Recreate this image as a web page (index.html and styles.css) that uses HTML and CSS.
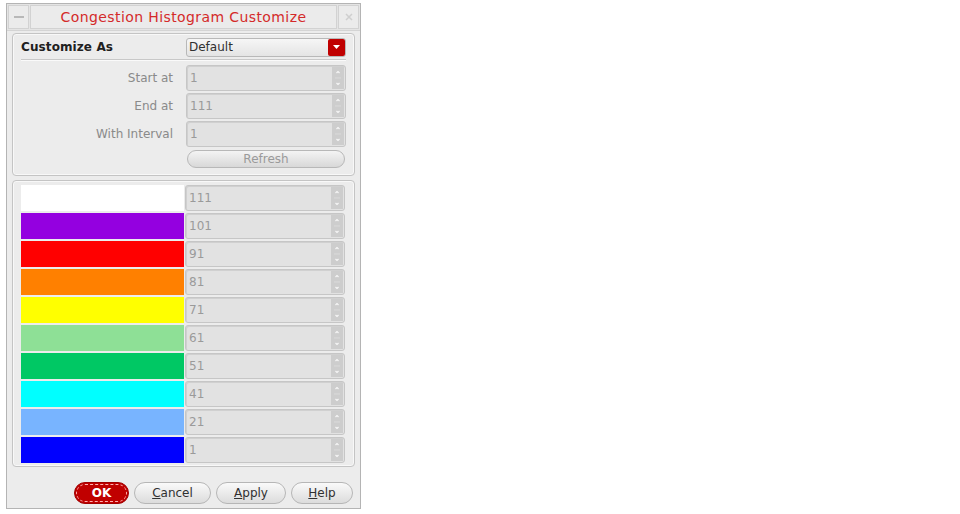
FILE: index.html
```html
<!DOCTYPE html>
<html>
<head>
<meta charset="utf-8">
<link rel="stylesheet" href="styles.css">
</head>
<body>
<div class="dialog">
  <div class="titlebar">
    <div class="tbtn"><span class="minbar"></span></div>
    <div class="title">Congestion Histogram Customize</div>
    <div class="tbtn close">
      <svg width="10" height="10" viewBox="0 0 10 10"><path d="M2 2L8 8M8 2L2 8" stroke="#cfcfcf" stroke-width="1.5"/></svg>
    </div>
  </div>
  <div class="body">
    <div class="group top">
      <div class="row-head">
        <span class="bold">Customize As</span>
        <div class="combo"><span>Default</span><span class="arrow"><svg width="9" height="6" viewBox="0 0 9 6"><path d="M1 1H8L4.5 5Z" fill="#fff"/></svg></span></div>
      </div>
      <div class="sep"></div>
      <div class="frow"><span class="lbl">Start at</span><div class="spin"><span>1</span><i class="sb"></i></div></div>
      <div class="frow"><span class="lbl">End at</span><div class="spin"><span>111</span><i class="sb"></i></div></div>
      <div class="frow"><span class="lbl">With Interval</span><div class="spin"><span>1</span><i class="sb"></i></div></div>
      <div class="refrow"><div class="refresh">Refresh</div></div>
    </div>
    <div class="group colors">
      <div class="crow"><div class="sw" style="background:#ffffff"></div><div class="spin"><span>111</span><i class="sb"></i></div></div>
      <div class="crow"><div class="sw" style="background:#9400e0"></div><div class="spin"><span>101</span><i class="sb"></i></div></div>
      <div class="crow"><div class="sw" style="background:#ff0000"></div><div class="spin"><span>91</span><i class="sb"></i></div></div>
      <div class="crow"><div class="sw" style="background:#ff8000"></div><div class="spin"><span>81</span><i class="sb"></i></div></div>
      <div class="crow"><div class="sw" style="background:#ffff00"></div><div class="spin"><span>71</span><i class="sb"></i></div></div>
      <div class="crow"><div class="sw" style="background:#8ee096"></div><div class="spin"><span>61</span><i class="sb"></i></div></div>
      <div class="crow"><div class="sw" style="background:#00c864"></div><div class="spin"><span>51</span><i class="sb"></i></div></div>
      <div class="crow"><div class="sw" style="background:#00ffff"></div><div class="spin"><span>41</span><i class="sb"></i></div></div>
      <div class="crow"><div class="sw" style="background:#78b4ff"></div><div class="spin"><span>21</span><i class="sb"></i></div></div>
      <div class="crow"><div class="sw" style="background:#0000ff"></div><div class="spin"><span>1</span><i class="sb"></i></div></div>
    </div>
    <div class="buttons">
      <div class="btn ok"><u>O</u>K</div>
      <div class="btn cancel"><u>C</u>ancel</div>
      <div class="btn apply"><u>A</u>pply</div>
      <div class="btn help"><u>H</u>elp</div>
    </div>
  </div>
</div>
</body>
</html>
```
FILE: styles.css
```css
html, body { margin: 0; padding: 0; background: #ffffff; }
body { font-family: "DejaVu Sans", sans-serif; font-size: 12px; }

.dialog {
  margin: 3px 0 0 6px;
  width: 355px;
  height: 506px;
  box-sizing: border-box;
  border: 1px solid #b4b4b4;
  background: #ececec;
  display: flex;
  flex-direction: column;
}
.titlebar {
  height: 24px;
  display: flex;
  align-items: stretch;
  gap: 1px;
  background: #e4e4e4;
  border-bottom: 1px solid #d4d4d4;
  padding: 1px;
}
.tbtn {
  width: 19px;
  border: 1px solid #d2d2d2;
  background: #ebebeb;
  display: flex;
  align-items: center;
  justify-content: center;
}
.minbar { width: 10px; height: 2px; background: #b8b8b8; display: block; }
.title {
  flex: 1;
  text-align: center;
  color: #d42a2a;
  font-size: 14px;
  line-height: 22px;
  border: 1px solid #d2d2d2;
  background: #ebebeb;
  letter-spacing: 0.4px;
}
.body {
  flex: 1;
  display: flex;
  flex-direction: column;
  padding: 2px 5px 0 5px;
}
.group {
  border: 1px solid #c4c4c4;
  border-radius: 4px;
  box-shadow: inset 0 0 0 1px #f8f8f8;
  padding: 3px 8px 0 8px;
}
.group.top { height: 143px; box-sizing: border-box; }
.row-head {
  height: 20px;
  display: flex;
  align-items: center;
  justify-content: space-between;
}
.bold { font-weight: bold; color: #202020; font-size: 12px; letter-spacing: 0.1px; }
.combo {
  width: 160px;
  height: 19px;
  box-sizing: border-box;
  border: 1px solid #b8b8b8;
  border-radius: 3px;
  background: linear-gradient(#f6f6f6, #e4e4e4);
  display: flex;
  align-items: center;
  justify-content: space-between;
  padding-left: 2px;
  color: #303030;
}
.arrow {
  width: 17px;
  height: 17px;
  background: #c00000;
  border-radius: 2px;
  display: flex;
  align-items: center;
  justify-content: center;
}
.sep { height: 1px; background: #c8c8c8; border-bottom: 1px solid #fafafa; margin: 2px 0 3px 0; }
.frow {
  display: flex;
  align-items: center;
  justify-content: flex-end;
  gap: 13px;
  height: 28px;
}
.lbl { color: #8a8a8a; }
.spin {
  width: 160px;
  height: 26px;
  box-sizing: border-box;
  border: 1px solid #c6c6c6;
  border-radius: 3px;
  background: #e2e2e2;
  display: flex;
  align-items: stretch;
  justify-content: space-between;
  color: #9a9a9a;
  box-shadow: inset 1px 1px 0 #d0d0d0;
}
.spin span { padding-left: 3px; line-height: 24px; }
.sb {
  width: 12px;
  margin: 1px;
  background-color: #cdcdcd;
  background-image:
    url("data:image/svg+xml;utf8,<svg xmlns='http://www.w3.org/2000/svg' width='12' height='22' viewBox='0 0 12 22'><path d='M4.5 6L6 4.5L7.5 6' fill='none' stroke='%23f6f6f6' stroke-width='1.2'/><path d='M3 11H9' stroke='%23dadada' stroke-width='1'/><path d='M4.5 16L6 17.5L7.5 16' fill='none' stroke='%23f6f6f6' stroke-width='1.2'/></svg>");
  background-repeat: no-repeat;
  background-position: center;
}
.refrow { display: flex; justify-content: flex-end; padding-top: 2px; padding-right: 1px; }
.refresh {
  width: 158px;
  height: 18px;
  box-sizing: border-box;
  border: 1px solid #b8b8b8;
  border-radius: 9px;
  background: linear-gradient(#f4f4f4, #d8d8d8);
  text-align: center;
  color: #9a9a9a;
  line-height: 16px;
}
.group.colors {
  margin-top: 4px;
  height: 287px;
  box-sizing: border-box;
  padding: 4px 8px 0 8px;
  display: flex;
  flex-direction: column;
  gap: 2px;
}
.crow { display: flex; align-items: stretch; gap: 1px; height: 26px; }
.sw { width: 163px; }
.buttons {
  display: flex;
  justify-content: flex-end;
  gap: 5px;
  padding: 15px 2px 0 0;
}
.btn {
  height: 22px;
  box-sizing: border-box;
  border: 1px solid #b6b6b6;
  border-radius: 11px;
  background: linear-gradient(#fafafa, #dcdcdc);
  text-align: center;
  line-height: 20px;
  color: #303030;
  font-size: 12px;
}
.btn u { text-decoration: underline; }
.ok {
  width: 55px;
  background: #c00000;
  border: 1px solid #a00000;
  color: #ffffff;
  font-weight: bold;
  outline: 1px dashed #ffb0b0;
  outline-offset: -3px;
}
.ok u { text-decoration: none; }
.cancel { width: 77px; }
.apply { width: 70px; }
.help { width: 62px; }
```
